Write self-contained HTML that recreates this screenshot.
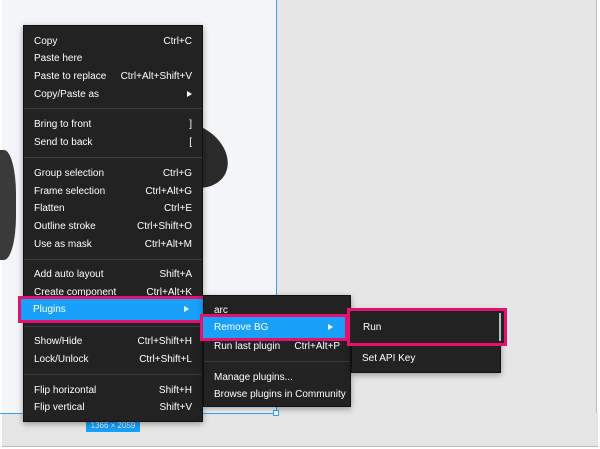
<!DOCTYPE html><html><head><style>
*{margin:0;padding:0;box-sizing:border-box}
body{width:600px;height:449px;background:#fff;position:relative;overflow:hidden;font-family:"Liberation Sans",sans-serif;font-size:10px;color:#fff}
.a{position:absolute}
.menu{position:absolute;background:#222;box-shadow:0 2px 6px rgba(0,0,0,.35);border:1px solid #111}
.it{position:absolute;left:10px;right:10px;height:18px;line-height:20px;white-space:nowrap}
.it span{position:absolute;right:0}
.sep{position:absolute;left:0;right:0;height:1px;background:#3c3c3c}
.tri{display:inline-block;width:0;height:0;border-left:5px solid #fff;border-top:3px solid transparent;border-bottom:3px solid transparent}
</style></head><body>
<div class="a" style="left:2px;top:0;width:274px;height:447px;background:#f3f5f7"></div>
<div class="a" style="left:277px;top:0;width:320px;height:447px;background:#e6e6e6;border-right:1px solid #bbb;border-bottom:1px solid #bbb"></div>
<div class="a" style="left:2px;top:413px;width:596px;height:34px;background:#e6e6e6;border-bottom:1px solid #bbb"></div>
<div class="a" style="left:150px;top:125px;width:80px;height:60px;border-radius:50%;background:#2a2a2a;transform:rotate(30deg)"></div>
<div class="a" style="left:-14px;top:150px;width:30px;height:110px;border-radius:40%;background:#3a3a3a"></div>
<div class="a" style="left:276px;top:0;width:1px;height:414px;background:#3aa0e8"></div>
<div class="a" style="left:0;top:413px;width:277px;height:1px;background:#3aa0e8"></div>
<div class="a" style="left:273px;top:410px;width:6px;height:6px;background:#fff;border:1px solid #3aa0e8"></div>
<div class="a" style="left:86px;top:420px;width:54px;height:12px;background:#18a0fb;color:#e8f4ff;font-size:8px;line-height:12px;text-align:center">1366 × 2059</div>

<div class="menu" style="left:23px;top:25px;width:180px;height:397px">
<div class="it" style="top:6px">Copy<span>Ctrl+C</span></div>
<div class="it" style="top:23px">Paste here</div>
<div class="it" style="top:41px">Paste to replace<span>Ctrl+Alt+Shift+V</span></div>
<div class="it" style="top:59px">Copy/Paste as<span><i class="tri"></i></span></div>
<div class="sep" style="top:82px"></div>
<div class="it" style="top:89px">Bring to front<span>]</span></div>
<div class="it" style="top:107px">Send to back<span>[</span></div>
<div class="sep" style="top:131px"></div>
<div class="it" style="top:138px">Group selection<span>Ctrl+G</span></div>
<div class="it" style="top:156px">Frame selection<span>Ctrl+Alt+G</span></div>
<div class="it" style="top:173px">Flatten<span>Ctrl+E</span></div>
<div class="it" style="top:191px">Outline stroke<span>Ctrl+Shift+O</span></div>
<div class="it" style="top:209px">Use as mask<span>Ctrl+Alt+M</span></div>
<div class="sep" style="top:233px"></div>
<div class="it" style="top:239px">Add auto layout<span>Shift+A</span></div>
<div class="it" style="top:257px">Create component<span>Ctrl+Alt+K</span></div>
<div class="sep" style="top:300px"></div>
<div class="it" style="top:306px">Show/Hide<span>Ctrl+Shift+H</span></div>
<div class="it" style="top:324px">Lock/Unlock<span>Ctrl+Shift+L</span></div>
<div class="sep" style="top:348px"></div>
<div class="it" style="top:355px">Flip horizontal<span>Shift+H</span></div>
<div class="it" style="top:372px">Flip vertical<span>Shift+V</span></div>
</div>
<div class="a" style="left:18px;top:296px;width:188px;height:27px;border:3px solid #e8106e"></div>
<div class="a" style="left:21px;top:299px;width:182px;height:21px;background:#18a0fb;line-height:22px;padding-left:12px">Plugins<span style="position:absolute;right:14px;top:0"><i class="tri"></i></span></div>

<div class="menu" style="left:203px;top:295px;width:148px;height:112px">
<div class="it" style="top:5px">arc</div>
<div class="it" style="top:41px">Run last plugin<span>Ctrl+Alt+P</span></div>
<div class="sep" style="top:65px"></div>
<div class="it" style="top:72px">Manage plugins...</div>
<div class="it" style="top:89px">Browse plugins in Community</div>
</div>
<div class="a" style="left:200px;top:314px;width:148px;height:27px;border:3px solid #e8106e"></div>
<div class="a" style="left:203px;top:317px;width:142px;height:21px;background:#18a0fb;line-height:22px;padding-left:11px">Remove BG<span style="position:absolute;right:12px;top:0"><i class="tri"></i></span></div>

<div class="menu" style="left:351px;top:309px;width:150px;height:64px">
<div class="it" style="top:39px">Set API Key</div>
</div>
<div class="a" style="left:347px;top:308px;width:160px;height:38px;border:3px solid #e8106e"></div>
<div class="a" style="left:350px;top:311px;width:154px;height:32px;background:#222;line-height:34px;padding-left:13px">Run</div>
<div class="a" style="left:499px;top:313px;width:2px;height:28px;background:#bbb"></div>
</body></html>
